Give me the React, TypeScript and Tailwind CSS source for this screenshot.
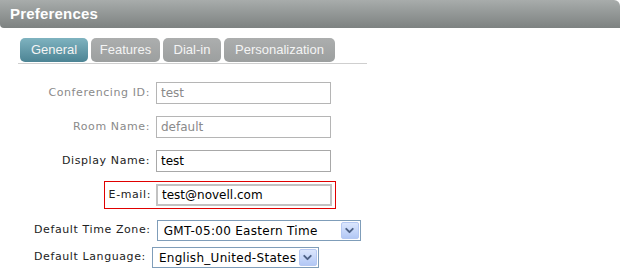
import { ChevronDown } from "lucide-react";

const tabs = [
  { name: "General", w: "w-[68px]" },
  { name: "Features", w: "w-[69px]" },
  { name: "Dial-in", w: "w-[58px]" },
  { name: "Personalization", w: "w-[111px]" },
];

function TextRow({
  label,
  value,
  disabled,
}: {
  label: string;
  value: string;
  disabled?: boolean;
}) {
  return (
    <div className="flex items-center h-[22px]">
      <span
        className={`w-[151px] text-right pr-px text-[11px] tracking-[0.6px] ${
          disabled ? "text-[#8a8a8a]" : "text-[#222]"
        }`}
      >
        {label}
      </span>
      <div
        className={`ml-[5px] w-[175px] h-[22px] flex items-center px-[4px] border text-[12px] ${
          disabled
            ? "border-[#b5b5b5] text-[#8a8a8a]"
            : "border-[#a8a8a8] text-black"
        }`}
      >
        {value}
      </div>
    </div>
  );
}

function Select({ value, width }: { value: string; width: string }) {
  return (
    <div
      className={`${width} h-[21px] flex items-center justify-between border border-[#7f9db9] bg-white pl-[6px] pr-px text-[12px] text-black tracking-[0.3px]`}
    >
      <span>{value}</span>
      <span className="w-[18px] h-[17px] rounded-[2px] border border-[#b5c8f2] bg-gradient-to-b from-[#dbe6fd] to-[#b3c8f5] flex items-center justify-center">
        <ChevronDown className="size-[13px] text-[#4d6185]" strokeWidth={3.5} />
      </span>
    </div>
  );
}

export default function App() {
  return (
    <div
      className="w-[626px] h-[273px] bg-white relative overflow-hidden"
      style={{ fontFamily: '"DejaVu Sans", sans-serif' }}
    >
      <div className="w-[620px] h-[28px] rounded-tr-[6px] rounded-bl-[4px] bg-gradient-to-b from-[#a8acab] to-[#7d8281] flex items-center pl-[10px]">
        <span
          className="text-white font-bold text-[15px] tracking-[0.2px]"
          style={{ fontFamily: '"Liberation Sans", sans-serif' }}
        >
          Preferences
        </span>
      </div>

      <div className="ml-[18px] mt-[10px] w-[349px] border-b border-[#cfcfcf] pb-px">
        <div
          className="flex gap-[3px] pl-[2px] h-[24px]"
          style={{ fontFamily: '"Liberation Sans", sans-serif' }}
        >
          {tabs.map((t, i) => (
            <div
              key={t.name}
              className={`${t.w} rounded-[5px] flex items-center justify-center text-[13px] text-[#f4f4f4] ${
                i === 0
                  ? "bg-gradient-to-b from-[#7fb3c0] to-[#4c8494]"
                  : "bg-gradient-to-b from-[#acaeae] to-[#9c9f9f]"
              }`}
            >
              {t.name}
            </div>
          ))}
        </div>
      </div>

      <div className="mt-[18px] flex flex-col gap-[12px]">
        <TextRow label="Conferencing ID:" value="test" disabled />
        <TextRow label="Room Name:" value="default" disabled />
        <TextRow label="Display Name:" value="test" />
      </div>

      <div className="mt-[9px] ml-[104px] w-[232px] h-[28px] border border-[#e00000] flex items-center">
        <span className="w-[46px] text-right text-[11px] tracking-[0.6px] text-[#222]">
          E-mail:
        </span>
        <div className="ml-[5px] w-[176px] h-[22px] flex items-center px-[4px] border-2 border-[#c2c2c2] text-[12px] text-black">
          test@novell.com
        </div>
      </div>

      <div className="mt-[11px] ml-[34px] flex flex-col gap-[6px]">
        <div className="flex items-center">
          <span className="text-[11px] tracking-[0.6px] text-[#222]">
            Default Time Zone:
          </span>
          <div className="ml-[6px]">
            <Select value="GMT-05:00 Eastern Time" width="w-[204px]" />
          </div>
        </div>
        <div className="flex items-center">
          <span className="text-[11px] tracking-[0.6px] text-[#222]">
            Default Language:
          </span>
          <div className="ml-[6px]">
            <Select value="English_United-States" width="w-[167px]" />
          </div>
        </div>
      </div>
    </div>
  );
}
